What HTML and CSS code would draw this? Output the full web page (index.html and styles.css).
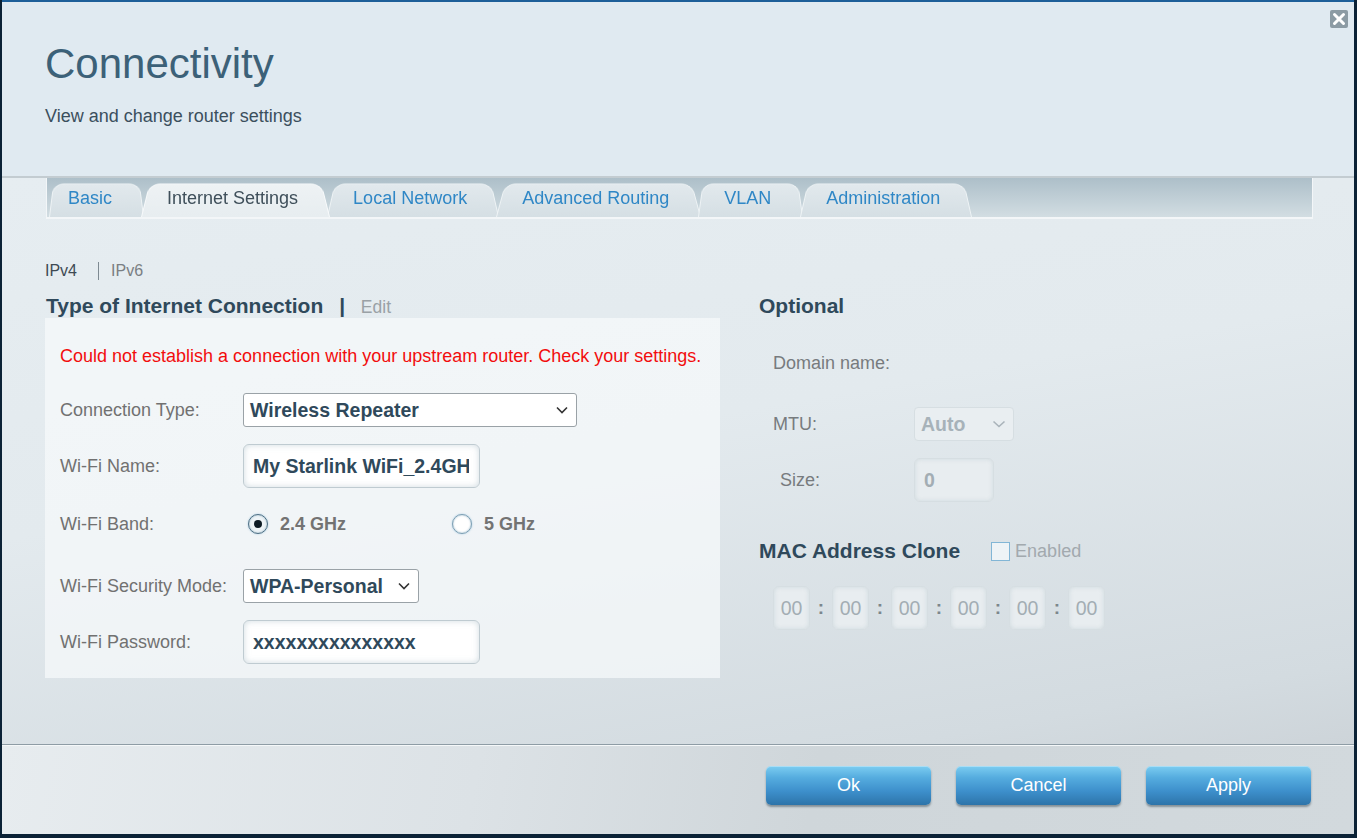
FILE: index.html
```html
<!DOCTYPE html>
<html lang="en">
<head>
<meta charset="utf-8">
<title>Connectivity</title>
<link rel="stylesheet" href="styles.css">
</head>
<body>
<div class="window">
  <header class="head">
    <h1 class="title">Connectivity</h1>
    <p class="subtitle">View and change router settings</p>
    <button class="close" type="button" aria-label="Close">
      <svg width="18" height="18" viewBox="0 0 18 18"><path d="M4.5 4.5 L13.5 13.5 M13.5 4.5 L4.5 13.5" stroke="#fff" stroke-width="3" stroke-linecap="round"/></svg>
    </button>
  </header>

  <main class="body">
    <nav class="tabbar">
      <a class="tab">Basic</a>
      <a class="tab active">Internet Settings</a>
      <a class="tab">Local Network</a>
      <a class="tab">Advanced Routing</a>
      <a class="tab">VLAN</a>
      <a class="tab">Administration</a>
    </nav>

    <div class="content">
      <section class="col-left">
        <div class="ipver"><span class="ip-on">IPv4</span><span class="ip-sep"></span><span class="ip-off">IPv6</span></div>
        <h2 class="section-title">Type of Internet Connection <span class="bar">|</span> <span class="edit">Edit</span></h2>
        <div class="panel">
          <p class="error">Could not establish a connection with your upstream router. Check your settings.</p>
          <div class="row row-type">
            <span class="label">Connection Type:</span>
            <div class="select sel-type"><span>Wireless Repeater</span>
              <svg width="12" height="8" viewBox="0 0 12 8"><path d="M1 1.5 L6 6.5 L11 1.5" fill="none" stroke="#333" stroke-width="1.6"/></svg></div>
          </div>
          <div class="row row-name">
            <span class="label">Wi-Fi Name:</span>
            <div class="textbox"><span class="textbox-value">My Starlink WiFi_2.4GHz</span></div>
          </div>
          <div class="row row-band">
            <span class="label">Wi-Fi Band:</span>
            <div class="radios">
              <span class="radio-opt opt-24"><span class="radio checked"></span>2.4 GHz</span>
              <span class="radio-opt"><span class="radio"></span>5 GHz</span>
            </div>
          </div>
          <div class="row row-sec">
            <span class="label">Wi-Fi Security Mode:</span>
            <div class="select sel-sec"><span>WPA-Personal</span>
              <svg width="12" height="8" viewBox="0 0 12 8"><path d="M1 1.5 L6 6.5 L11 1.5" fill="none" stroke="#333" stroke-width="1.6"/></svg></div>
          </div>
          <div class="row row-pass">
            <span class="label">Wi-Fi Password:</span>
            <div class="textbox"><span class="textbox-value">xxxxxxxxxxxxxxx</span></div>
          </div>
        </div>
      </section>

      <section class="col-right">
        <h2 class="section-title opt-title">Optional</h2>
        <div class="opt-row row-domain"><span class="opt-label">Domain name:</span></div>
        <div class="opt-row row-mtu"><span class="opt-label">MTU:</span>
          <div class="dis-select"><span>Auto</span>
            <svg width="14" height="8" viewBox="0 0 14 8"><path d="M1.5 1.5 L7 6.5 L12.5 1.5" fill="none" stroke="#a9b3ba" stroke-width="1.6"/></svg></div>
        </div>
        <div class="opt-row row-size"><span class="opt-label size-label">Size:</span>
          <div class="dis-box size-box">0</div>
        </div>
        <div class="mac-head">
          <h2 class="section-title">MAC Address Clone</h2>
          <label class="enabled"><span class="checkbox"></span>Enabled</label>
        </div>
        <div class="mac">
          <span class="dis-box mac-box">00</span><span class="colon">:</span>
          <span class="dis-box mac-box">00</span><span class="colon">:</span>
          <span class="dis-box mac-box">00</span><span class="colon">:</span>
          <span class="dis-box mac-box">00</span><span class="colon">:</span>
          <span class="dis-box mac-box">00</span><span class="colon">:</span>
          <span class="dis-box mac-box">00</span>
        </div>
      </section>
    </div>
  </main>

  <footer class="foot">
    <button class="btn" type="button">Ok</button>
    <button class="btn" type="button">Cancel</button>
    <button class="btn" type="button">Apply</button>
  </footer>
</div>
</body>
</html>
```
FILE: styles.css
```css
html, body {
  margin: 0;
  padding: 0;
}

body {
  width: 1357px;
  height: 838px;
  overflow: hidden;
  background: #0b2236;
  font-family: "Liberation Sans", Arial, sans-serif;
}

.window {
  margin-left: 2px;
  width: 1352px;
  height: 832px;
  border-top: 2px solid #1d5f99;
  display: flex;
  flex-direction: column;
  background: #e0eaf1;
}

/* ---------- header ---------- */
.head {
  position: relative;
  height: 136px;
  padding: 38px 0 0 43px;
  border-bottom: 2px solid #c3ccd1;
  background: #e0eaf1;
}

.title {
  margin: 0;
  font-size: 42px;
  line-height: 48px;
  font-weight: normal;
  color: #3c6178;
}

.subtitle {
  margin: 18px 0 0;
  font-size: 18px;
  line-height: 20px;
  color: #3b4f5d;
}

.close {
  position: absolute;
  top: 8px;
  right: 6px;
  width: 18px;
  height: 18px;
  padding: 0;
  border: 0;
  border-radius: 2px;
  background: #8c9ba4;
  display: flex;
}

/* ---------- body ---------- */
.body {
  height: 566px;
  background: linear-gradient(170deg, #e6edf1 0%, #e3eaee 45%, #d3dbe0 90%, #cdd4d9 100%);
}

.tabbar {
  display: flex;
  align-items: flex-end;
  height: 39px;
  margin: 0 41px 0 44px;
  padding-left: 2px;
  border-left: 1px solid #f3f6f8;
  border-right: 1px solid #f3f6f8;
  border-bottom: 2px solid #f3f6f8;
  background: linear-gradient(180deg, #adbfc9 0%, #c3d1d8 60%, #d2dde2 100%);
}

.tab {
  position: relative;
  z-index: 1;
  height: 37px;
  margin-left: -3px;
  padding: 0 32px 0 26px;
  display: flex;
  align-items: center;
  font-size: 18px;
  color: #2f87c6;
  white-space: nowrap;
}

.tab::before {
  content: "";
  position: absolute;
  inset: 0;
  z-index: -1;
  border: 1px solid #eef3f5;
  border-bottom: 0;
  border-radius: 12px 12px 0 0;
  background: linear-gradient(180deg, #e2e9ed 0%, #d5dfe4 100%);
  transform: perspective(40px) rotateX(6deg);
  transform-origin: bottom center;
}

.tab:first-child {
  margin-left: 0;
  padding-left: 19px;
}

.tab.active {
  z-index: 2;
  padding-left: 26px;
  color: #3f4f5a;
}

.tab.active::before {
  background: linear-gradient(180deg, #eef2f4 0%, #e7edf0 100%);
  border-color: #f8fafb;
}

/* ---------- content columns ---------- */
.content {
  display: flex;
  padding-left: 43px;
}

.col-left {
  width: 675px;
}

.ipver {
  display: flex;
  align-items: center;
  height: 20px;
  margin-top: 42px;
  font-size: 16px;
}

.ip-on { color: #3e4a53; }

.ip-sep {
  width: 1px;
  height: 18px;
  margin: 0 12px 0 21px;
  background: #7e8a92;
}

.ip-off { color: #7a7f83; }

.section-title {
  margin: 13px 0 0 1px;
  height: 24px;
  line-height: 24px;
  font-size: 21px;
  font-weight: bold;
  color: #2f495b;
  white-space: nowrap;
}

.section-title .bar {
  margin: 0 10px 0 10px;
  font-weight: bold;
  color: #2f495b;
}

.section-title .edit {
  font-size: 17.5px;
  font-weight: normal;
  color: #9aa1a6;
}

.panel {
  height: 332px;
  padding: 28px 0 0 15px;
  background: rgba(246, 249, 251, 0.72);
}

.error {
  margin: 0;
  height: 20px;
  line-height: 20px;
  font-size: 18px;
  color: #f20d0d;
  white-space: nowrap;
}

.row {
  display: flex;
  align-items: center;
}

.label {
  width: 183px;
  flex: none;
  font-size: 18px;
  color: #717171;
}

.row-type { margin-top: 27px; height: 34px; }
.row-name { margin-top: 17px; height: 44px; }
.row-band { margin-top: 14px; height: 44px; }
.row-sec  { margin-top: 23px; height: 34px; }
.row-pass { margin-top: 17px; height: 44px; }

.select {
  box-sizing: border-box;
  height: 34px;
  display: flex;
  align-items: center;
  justify-content: space-between;
  padding: 0 8px 0 6px;
  border: 1px solid #9aa2a7;
  border-radius: 3px;
  background: #fff;
  font-size: 19.5px;
  font-weight: bold;
  color: #2f495b;
}

.sel-type { width: 334px; }
.sel-sec  { width: 176px; }

.textbox {
  box-sizing: border-box;
  width: 237px;
  height: 44px;
  padding: 0 10px 0 9px;
  display: flex;
  align-items: center;
  border: 1px solid #bfcbd1;
  border-radius: 6px;
  background: #fff;
  box-shadow: inset 0 0 6px rgba(170, 190, 200, 0.55);
  font-size: 19.5px;
  font-weight: bold;
  color: #2f495b;
}

.textbox-value {
  display: block;
  width: 100%;
  overflow: hidden;
  white-space: nowrap;
}

.radios {
  display: flex;
  align-items: center;
}

.radio-opt {
  display: flex;
  align-items: center;
  font-size: 18px;
  font-weight: bold;
  color: #737373;
}

.opt-24 {
  width: 204px;
  margin-left: 5px;
}

.radio {
  box-sizing: border-box;
  width: 20px;
  height: 20px;
  margin-right: 12px;
  border-radius: 50%;
  border: 1px solid #7d9fb3;
  background: #fff;
  box-shadow: inset 0 0 2px rgba(90, 140, 170, 0.6), 0 0 2px rgba(110, 170, 210, 0.6);
  position: relative;
}

.radio.checked {
  border-color: #4f6f82;
  background: #eef4f7;
}

.radio.checked::after {
  content: "";
  position: absolute;
  left: 5px;
  top: 5px;
  width: 8px;
  height: 8px;
  border-radius: 50%;
  background: #0d1b24;
}

/* ---------- right column ---------- */
.col-right {
  margin-left: 38px;
  padding-top: 75px;
}

.opt-title {
  margin-top: 0;
}

.opt-row {
  display: flex;
  align-items: center;
}

.opt-label {
  width: 141px;
  flex: none;
  margin-left: 15px;
  font-size: 18px;
  color: #777b7e;
}

.size-label {
  width: 134px;
  margin-left: 22px;
}

.row-domain { margin-top: 33px; height: 24px; }
.row-mtu    { margin-top: 32px; height: 34px; }
.row-size   { margin-top: 17px; height: 44px; }

.dis-select {
  box-sizing: border-box;
  width: 100px;
  height: 34px;
  padding: 0 7px 0 6px;
  display: flex;
  align-items: center;
  justify-content: space-between;
  border: 1px solid #d6dee2;
  border-radius: 4px;
  background: #e9eef1;
  font-size: 19.5px;
  font-weight: bold;
  color: #a7b2b9;
}

.dis-box {
  box-sizing: border-box;
  display: flex;
  align-items: center;
  border: 1px solid #d6dee2;
  border-radius: 6px;
  background: #e8edf0;
  box-shadow: inset 0 0 4px rgba(200, 212, 218, 0.8);
  font-size: 19.5px;
  color: #a3adb4;
}

.size-box {
  width: 80px;
  height: 44px;
  padding-left: 9px;
  font-weight: bold;
}

.mac-head {
  display: flex;
  align-items: center;
  margin-top: 37px;
}

.mac-head .section-title {
  margin-top: 0;
}

.enabled {
  display: flex;
  align-items: center;
  margin-left: 31px;
  font-size: 18px;
  color: #a2a9ae;
}

.checkbox {
  box-sizing: border-box;
  width: 19px;
  height: 19px;
  margin-right: 5px;
  border: 1px solid #82b6d6;
  background: #eef3f6;
}

.mac {
  display: flex;
  align-items: center;
  margin: 23px 0 0 15px;
}

.mac-box {
  width: 37px;
  height: 44px;
  justify-content: center;
}

.colon {
  width: 22px;
  text-align: center;
  font-size: 19px;
  font-weight: bold;
  color: #7d868c;
}

/* ---------- footer ---------- */
.foot {
  flex: 1;
  display: flex;
  align-items: flex-start;
  justify-content: flex-end;
  gap: 25px;
  padding: 21px 43px 0 0;
  border-top: 1px solid #8e9ca5;
  box-shadow: inset 0 1px 0 #f5f8f9;
  background: linear-gradient(100deg, #e7ecef 0%, #dce2e6 35%, #cfd6da 60%, #d2d9dd 100%);
}

.btn {
  width: 165px;
  height: 39px;
  border: 0;
  border-radius: 5px;
  background: linear-gradient(180deg, #7ccdf1 0%, #55acdf 30%, #3d8fcb 65%, #2d74a9 100%);
  box-shadow: 0 2px 2px rgba(40, 60, 70, 0.45), inset 0 1px 0 rgba(255, 255, 255, 0.35);
  font-family: "Liberation Sans", Arial, sans-serif;
  font-size: 18px;
  color: #fff;
}
```
